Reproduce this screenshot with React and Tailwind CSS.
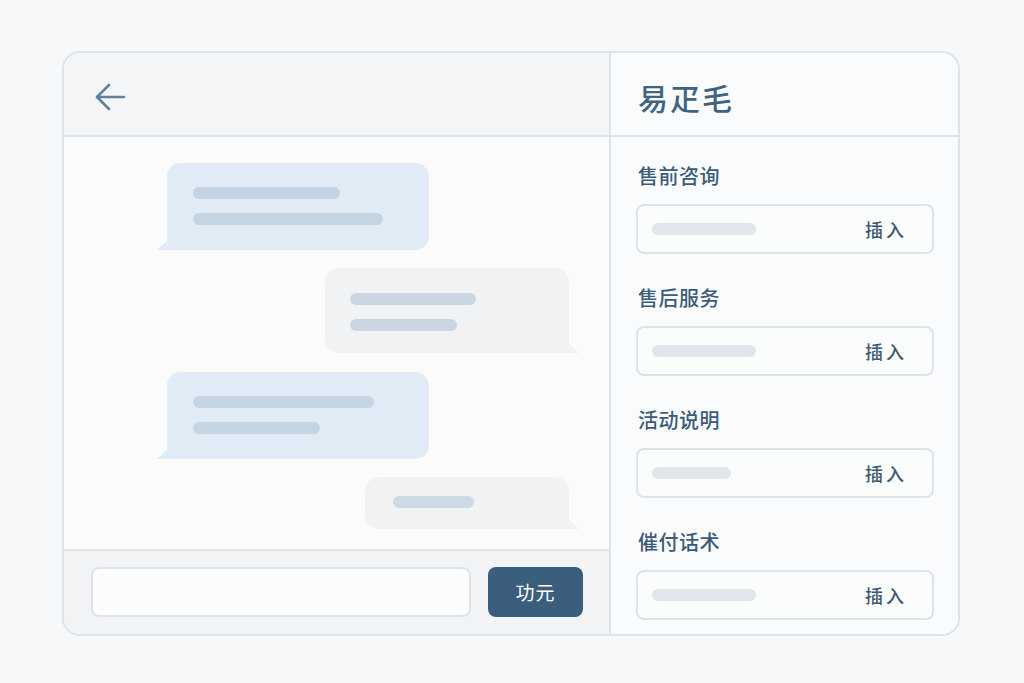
const cjk = { fontFamily: '"Noto Sans CJK SC", "Noto Sans", sans-serif' };

const replies = [
  { title: "售前咨询", bar: "w-[104px]" },
  { title: "售后服务", bar: "w-[104px]" },
  { title: "活动说明", bar: "w-[79px]" },
  { title: "催付话术", bar: "w-[104px]" },
];

function Bubble({ side, className, children }) {
  const left = side === "left";
  return (
    <div
      className={
        "relative " +
        (left
          ? "self-start bg-[#e0ebf5] rounded-[14px] rounded-bl-none "
          : "self-end bg-[#f0f2f3] rounded-[14px] rounded-br-none ") +
        className
      }
    >
      {children}
      {/* tail */}
      <span
        className={
          "absolute bottom-0 w-[11px] h-[10px] " +
          (left
            ? "-left-[10px] bg-[#e0ebf5] [clip-path:polygon(100%_0,100%_100%,0_100%)]"
            : "-right-[10px] bg-[#f0f2f3] [clip-path:polygon(0_0,100%_100%,0_100%)]")
        }
      />
    </div>
  );
}

function Bar({ className }) {
  return <div className={"h-[12px] rounded-full " + className} />;
}

export default function App() {
  return (
    <div className="min-h-[683px] w-full bg-[#f7f8f9] pt-[51px] pl-[62px]" style={cjk}>
      <div className="w-[898px] h-[585px] flex border-2 border-[#dde3e9] rounded-[18px] overflow-hidden bg-[#fafbfc]">
        {/* Chat column */}
        <div className="w-[547px] flex flex-col border-r-2 border-[#dde3e9]">
          <div className="h-[84px] shrink-0 flex items-center pl-[30px] pt-[6px] bg-[#f4f5f6] border-b-2 border-[#dde3e9]">
            <svg width="32" height="28" viewBox="0 0 32 28" fill="none" stroke="#5f819e" strokeWidth="2.6" strokeLinecap="round" strokeLinejoin="round">
              <path d="M3 14H30M15 2L3 14L15 26" />
            </svg>
          </div>

          <div className="h-[412px] shrink-0 flex flex-col pt-[26px] pl-[103px] pr-[40px] bg-[#fbfbfc]">
            <Bubble side="left" className="w-[262px] h-[87px] pt-[24px] pl-[26px]">
              <Bar className="w-[147px] bg-[#c4d4e2]" />
              <Bar className="w-[190px] bg-[#c4d4e2] mt-[14px]" />
            </Bubble>
            <Bubble side="right" className="w-[244px] h-[85px] mt-[18px] pt-[25px] pl-[25px]">
              <Bar className="w-[126px] bg-[#cad6e2]" />
              <Bar className="w-[107px] bg-[#cad6e2] mt-[14px]" />
            </Bubble>
            <Bubble side="left" className="w-[262px] h-[87px] mt-[19px] pt-[24px] pl-[26px]">
              <Bar className="w-[181px] bg-[#c4d4e2]" />
              <Bar className="w-[127px] bg-[#c4d4e2] mt-[14px]" />
            </Bubble>
            <Bubble side="right" className="w-[204px] h-[52px] mt-[18px] pt-[19px] pl-[28px]">
              <Bar className="w-[81px] bg-[#cdd9e5]" />
            </Bubble>
          </div>

          <div className="flex-1 flex items-start gap-[17px] pl-[27px] pt-[16px] bg-[#f2f3f4] border-t-2 border-[#dde3e9]">
            <div className="w-[380px] h-[50px] rounded-[8px] border-2 border-[#dde3e9] bg-[#fcfcfd]" />
            <button className="w-[95px] h-[50px] rounded-[8px] bg-[#3b5e7d] text-white text-[19px] tracking-[1px]">
              功元
            </button>
          </div>
        </div>

        {/* Quick replies column */}
        <div className="flex-1 flex flex-col">
          <div className="h-[84px] shrink-0 flex items-center pl-[27px] pt-[6px] border-b-2 border-[#dde3e9] bg-[#fafbfc]">
            <h1 className="text-[30px] font-medium text-[#3e6482] tracking-[2px] leading-none">易疋毛</h1>
          </div>
          <div className="flex-1 flex flex-col pt-[26px] pl-[25px] pr-[24px] bg-[#fafbfc]">
            {replies.map((r, i) => (
              <div key={r.title} className={i > 0 ? "mt-[31px]" : ""}>
                <div className="h-[26px] leading-[26px] text-[20px] font-medium text-[#3b5c78] pl-[2px] tracking-[0.5px]">
                  {r.title}
                </div>
                <div className="mt-[15px] h-[50px] flex items-center justify-between pl-[14px] pr-[25px] rounded-[8px] border-2 border-[#dde3e9] bg-[#fbfcfc]">
                  <Bar className={r.bar + " h-[11px] bg-[#e1e6ea]"} />
                  <span className="text-[18px] font-medium text-[#3e5a72] tracking-[3px]">插入</span>
                </div>
              </div>
            ))}
          </div>
        </div>
      </div>
    </div>
  );
}
